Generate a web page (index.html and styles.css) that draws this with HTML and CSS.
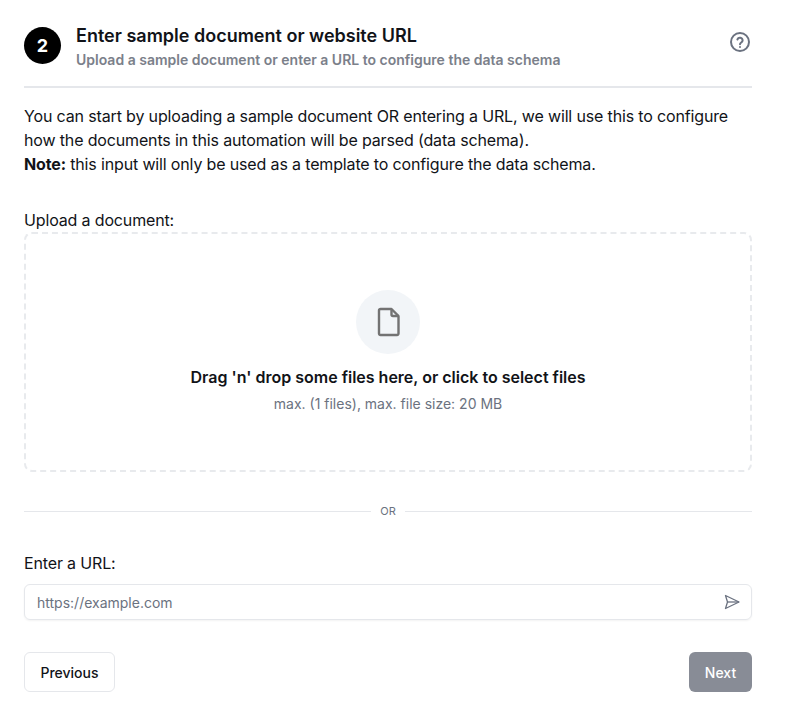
FILE: index.html
```html
<!DOCTYPE html>
<html lang="en">
<head>
  <meta charset="UTF-8">
  <title>Enter sample document or website URL</title>
  <link rel="stylesheet" href="styles.css">
</head>
<body>
<div class="step-container">
  <div class="step-header">
    <div class="step-number">2</div>
    <div class="step-titles">
      <h2>Enter sample document or website URL</h2>
      <p>Upload a sample document or enter a URL to configure the data schema</p>
    </div>
    <svg class="help-icon" width="24" height="24" viewBox="0 0 24 24" fill="none" stroke="#6b7280" stroke-width="2" stroke-linecap="round" stroke-linejoin="round">
      <circle cx="12" cy="12" r="9"/>
      <path d="M9.4 9.5a2.7 2.7 0 0 1 5.2.9c0 1.8-2.6 2.2-2.6 3.8"/>
      <path d="M12 17v.01"/>
    </svg>
  </div>
  <div class="intro">
    You can start by uploading a sample document OR entering a URL, we will use this to configure how the documents in this automation will be parsed (data schema).<br>
    <strong>Note:</strong> this input will only be used as a template to configure the data schema.
  </div>
  <div class="field-label upload-label">Upload a document:</div>
  <div class="dropzone">
    <div class="file-circle">
      <svg width="24" height="30" viewBox="0 0 24 30" fill="none" stroke="#737373" stroke-width="2.4" stroke-linejoin="round">
        <path d="M4.5 2H15.5L22.5 9V26.5a1.5 1.5 0 0 1-1.5 1.5H4.5A1.5 1.5 0 0 1 3 26.5V3.5A1.5 1.5 0 0 1 4.5 2z"/>
        <path d="M15.5 2V7.5a1.5 1.5 0 0 0 1.5 1.5H22.5"/>
      </svg>
    </div>
    <div class="drop-title">Drag 'n' drop some files here, or click to select files</div>
    <div class="drop-hint">max. (1 files), max. file size: 20 MB</div>
  </div>
  <div class="divider"><span>OR</span></div>
  <div class="field-label">Enter a URL:</div>
  <div class="url-input">
    <input type="text" placeholder="https://example.com">
    <svg width="16" height="16" viewBox="0 0 16 16" fill="none" stroke="#6b7280" stroke-width="1.3" stroke-linejoin="round">
      <path d="M1.5 1.5L15 8L1.5 14.5L3.5 8z"/>
      <path d="M3.5 8H15"/>
    </svg>
  </div>
  <div class="actions">
    <button class="btn-prev">Previous</button>
    <button class="btn-next">Next</button>
  </div>
</div>
</body>
</html>
```

FILE: styles.css
```css
body {
  font-family: Inter, sans-serif;
  background-color: #fff;
  color: #111318;
  margin: 0;
}
.step-container {
  width: 728px;
  padding: 24px 0 0 24px;
}
.step-header {
  display: flex;
  align-items: flex-start;
  height: 62px;
  border-bottom: 2px solid #e5e7eb;
  box-sizing: content-box;
}
.step-number {
  width: 37px;
  height: 37px;
  border-radius: 50%;
  background-color: #000;
  color: #fff;
  font-size: 18px;
  font-weight: 700;
  display: flex;
  align-items: center;
  justify-content: center;
  margin-top: 3px;
}
.step-titles {
  margin-left: 15px;
  flex: 1;
}
h2 {
  margin: 0;
  font-size: 18px;
  line-height: 24px;
  font-weight: 600;
}
.step-titles p {
  margin: 2px 0 0;
  font-size: 14px;
  line-height: 20px;
  font-weight: 600;
  color: #7b808a;
}
.help-icon {
  margin: 6px 0 0;
}
.intro {
  margin-top: 16px;
  font-size: 16px;
  letter-spacing: -0.15px;
  line-height: 24px;
}
.field-label {
  font-size: 16px;
  letter-spacing: -0.15px;
  line-height: 24px;
}
.upload-label {
  margin-top: 32px;
}
.dropzone {
  height: 240px;
  border: 2px dashed #e8eaed;
  border-radius: 8px;
  display: flex;
  flex-direction: column;
  align-items: center;
  padding-top: 56px;
  box-sizing: border-box;
}
.file-circle {
  width: 64px;
  height: 64px;
  border-radius: 50%;
  background-color: #f2f5f8;
  display: flex;
  align-items: center;
  justify-content: center;
}
.drop-title {
  margin-top: 13px;
  font-size: 16px;
  line-height: 20px;
  font-weight: 600;
}
.drop-hint {
  margin-top: 8px;
  font-size: 14px;
  line-height: 18px;
  color: #6b7280;
}
.divider {
  display: flex;
  align-items: center;
  gap: 9px;
  margin-top: 29px;
  font-size: 11px;
  line-height: 20px;
  color: #6b7280;
}
.divider::before, .divider::after {
  content: "";
  flex: 1;
  height: 1px;
  background-color: #e5e7eb;
}
.divider + .field-label {
  margin-top: 30px;
}
.url-input {
  display: flex;
  align-items: center;
  margin-top: 9px;
  height: 36px;
  border: 1px solid #e5e7eb;
  border-radius: 6px;
  padding: 0 11px 0 12px;
  box-shadow: 0 1px 2px rgba(0,0,0,0.05);
  box-sizing: border-box;
}
.url-input input {
  flex: 1;
  border: 0;
  outline: 0;
  padding: 0;
  font-family: inherit;
  font-size: 14px;
}
.url-input input::placeholder {
  color: #6b7280;
}
.actions {
  display: flex;
  justify-content: space-between;
  margin-top: 32px;
}
button {
  height: 40px;
  border-radius: 6px;
  font-family: inherit;
  font-size: 14px;
  font-weight: 500;
}
.btn-prev {
  width: 91px;
  background-color: #fff;
  color: #111318;
  border: 1px solid #e5e7eb;
}
.btn-next {
  width: 63px;
  background-color: #888c96;
  color: #fff;
  border: 0;
}
```
